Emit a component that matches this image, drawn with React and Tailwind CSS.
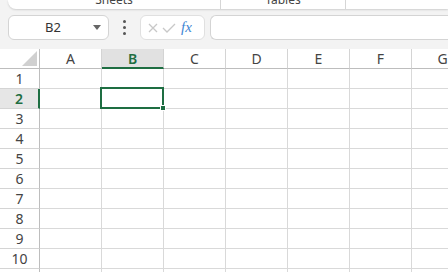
import React from "react";

const cols = ["A", "B", "C", "D", "E", "F", "G"];
const rows = [1, 2, 3, 4, 5, 6, 7, 8, 9, 10, 11];

const App = () => {
  return (
    <div className="w-[448px] h-[272px] overflow-hidden bg-[#f3f3f3] text-[#444]" style={{ fontFamily: '"Noto Sans", "Open Sans", sans-serif' }}>
      {/* ribbon tabs, scrolled off the top */}
      <div className="h-[9px] overflow-visible">
        <div className="ml-[8px] h-[9px] bg-white rounded-bl-lg shadow-[0_1px_2px_rgba(0,0,0,0.15)] flex overflow-hidden">
          <div className="w-[213px] border-r border-[#d6d6d6] text-center text-[12px] leading-[12px] -mt-[6px]">Sheets</div>
          <div className="w-[125px] border-r border-[#d6d6d6] text-center text-[12px] leading-[12px] -mt-[6px]">Tables</div>
          <div className="flex-1"></div>
        </div>
      </div>

      {/* formula bar */}
      <div className="flex items-center mt-[6px] h-[25px] mb-[9px]">
        <div className="ml-[8px] w-[101px] h-[25px] bg-white border border-[#d4d4d4] rounded-md flex items-center">
          <span className="flex-1 text-center text-[13px] pl-[4px] text-[#333]">B2</span>
          <svg width="8" height="6" viewBox="0 0 8 6" className="mr-[7px]">
            <path d="M0 0 L8 0 L4 5 Z" fill="#666" />
          </svg>
        </div>
        <div className="w-[30px] flex flex-col items-center gap-[3px]">
          <div className="w-[3px] h-[3px] rounded-full bg-[#555]"></div>
          <div className="w-[3px] h-[3px] rounded-full bg-[#555]"></div>
          <div className="w-[3px] h-[3px] rounded-full bg-[#555]"></div>
        </div>
        <div className="ml-[1px] w-[65px] h-[25px] bg-white border border-[#e0e0e0] rounded-md flex items-center pl-[5px]">
          <svg width="12" height="12" viewBox="0 0 12 12" className="ml-[1px]">
            <path d="M2 2 L10 10 M10 2 L2 10" stroke="#c8c8c8" strokeWidth="1.3" fill="none" />
          </svg>
          <svg width="14" height="12" viewBox="0 0 14 12" className="ml-[3px]">
            <path d="M1 6 L5 10 L13 2" stroke="#c8c8c8" strokeWidth="1.3" fill="none" />
          </svg>
          <span className="ml-[5px] italic text-[15px] leading-none text-[#3f86d4]" style={{ fontFamily: '"Liberation Serif", serif' }}>fx</span>
        </div>
        <div className="ml-[5px] flex-1 h-[25px] bg-white border border-[#d4d4d4] rounded-l-md border-r-0"></div>
      </div>

      {/* grid */}
      <div className="bg-white grid grid-cols-[40px_repeat(7,62px)] auto-rows-[20px] text-[14px]">
        <div className="border-r border-b border-[#bdbdbd] flex items-end justify-end pr-[2px] pb-[2px]">
          <svg width="15" height="15" viewBox="0 0 15 15">
            <path d="M15 0 L15 15 L0 15 Z" fill="#d0d0d0" />
          </svg>
        </div>
        {cols.map((c) => (
          <div
            key={c}
            className={
              c === "B"
                ? "bg-[#e1e1e1] border-r border-[#d4d4d4] border-b-2 border-b-[#1e6e42] flex items-center justify-center font-semibold text-[#1e6e42]"
                : "border-r border-[#d4d4d4] border-b border-b-[#bdbdbd] flex items-center justify-center"
            }
          >
            {c}
          </div>
        ))}
        {rows.map((r) => (
          <React.Fragment key={r}>
            <div
              className={
                r === 2
                  ? "bg-[#e6e6e6] border-r-2 border-r-[#1e6e42] border-b border-[#d4d4d4] flex items-center justify-center font-semibold text-[#1e6e42]"
                  : "border-r border-r-[#bdbdbd] border-b border-[#d4d4d4] flex items-center justify-center"
              }
            >
              {r < 11 ? r : ""}
            </div>
            {cols.map((c) => (
              <div key={c} className="relative border-r border-b border-[#d9d9d9]">
                {r === 2 && c === "B" && (
                  <div className="absolute -left-[2px] -top-[2px] w-[64px] h-[22px] border-2 border-[#1e6e42] z-10">
                    <div className="absolute -right-[4px] -bottom-[4px] w-[6px] h-[6px] bg-[#1e6e42] border border-white"></div>
                  </div>
                )}
              </div>
            ))}
          </React.Fragment>
        ))}
      </div>
    </div>
  );
};

export default App;
